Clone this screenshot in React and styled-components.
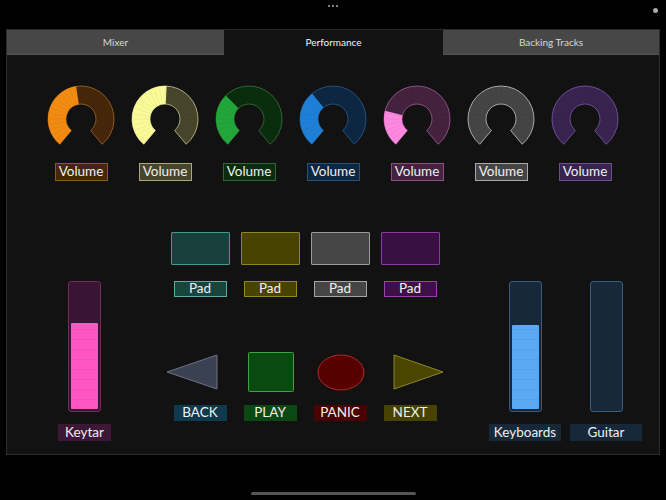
import React from 'react'
import styled, { createGlobalStyle } from 'styled-components'

const GlobalStyle = createGlobalStyle`
  html, body {
    margin: 0;
    padding: 0;
    background: #000;
  }
  body {
    font-family: Lato, "Open Sans", "DejaVu Sans", sans-serif;
    color: #eee;
  }
`

const Screen = styled.div`
  width: 666px;
  height: 500px;
  display: flex;
  flex-direction: column;
  background: #000;
  overflow: hidden;
`

const StatusBar = styled.div`
  height: 29px;
  display: grid;
  grid-template-columns: 1fr auto 1fr;
  align-items: start;
`

const Dots = styled.div`
  grid-column: 2;
  display: flex;
  gap: 2px;
  padding-top: 5px;
  span {
    width: 2px;
    height: 2px;
    border-radius: 50%;
    background: #b0b0b0;
  }
`

const StatusDot = styled.div`
  grid-column: 3;
  justify-self: end;
  margin: 8px 8px 0 0;
  width: 5px;
  height: 5px;
  border-radius: 50%;
  background: #a8a8a8;
`

const Panel = styled.div`
  margin: 0 6px;
  height: 426px;
  box-sizing: border-box;
  border: 1px solid #2c2c2c;
  background: #121212;
  display: flex;
  flex-direction: column;
`

const Tabs = styled.div`
  display: grid;
  grid-template-columns: 217px 219px 1fr;
  height: 25px;
`

const Tab = styled.div`
  display: flex;
  align-items: center;
  justify-content: center;
  font-size: 10px;
  color: ${p => (p.$active ? '#f2f2f2' : '#d8d8d8')};
  background: ${p => (p.$active ? '#121212' : '#474747')};
  border-bottom: 1px solid ${p => (p.$active ? '#121212' : '#555')};
  box-sizing: border-box;
`

const Content = styled.div`
  flex: 1;
  display: flex;
  flex-direction: column;
  align-items: center;
  padding-top: 29px;
`

const KnobRow = styled.div`
  display: grid;
  grid-template-columns: repeat(7, 84px);
`

const KnobCell = styled.div`
  display: flex;
  flex-direction: column;
  align-items: center;
  gap: 9px;
`

const Tag = styled.div`
  box-sizing: border-box;
  width: ${p => p.$w || 53}px;
  height: ${p => p.$h || 18}px;
  display: flex;
  align-items: center;
  justify-content: center;
  font-size: 13.5px;
  line-height: 1;
  color: #f0f0f0;
  background: ${p => p.$bg};
  border: 1px solid ${p => p.$edge || p.$bg};
`

const Bottom = styled.div`
  margin-top: 51px;
  width: 100%;
  display: flex;
  align-items: flex-end;
  padding-left: 51px;
  box-sizing: border-box;
`

const SliderCol = styled.div`
  width: ${p => p.$w}px;
  display: flex;
  flex-direction: column;
  align-items: center;
  gap: 12px;
`

const Middle = styled.div`
  margin-left: 54px;
  padding-bottom: 20px;
  display: grid;
  grid-template-columns: repeat(4, 70px);
  justify-items: center;
`

const Pad = styled.div`
  width: 59px;
  height: 33px;
  box-sizing: border-box;
  background: ${p => p.$bg};
  border: 1px solid ${p => p.$edge};
  border-radius: 1px;
  margin-bottom: 16px;
`

const ShapeCell = styled.svg`
  display: block;
  margin: 55px 0 13px;
`

const RightGroup = styled.div`
  margin-left: 44px;
  display: flex;
  gap: 9px;
`

const Track = styled.div`
  width: 33px;
  height: 131px;
  box-sizing: border-box;
  padding: 2px;
  border: 1px solid ${p => p.$edge};
  border-radius: 3px;
  background: ${p => p.$bg};
  display: flex;
  flex-direction: column;
  justify-content: flex-end;
`

const Fill = styled.div`
  border-radius: 1px;
  background-color: ${p => p.$color};
  background-image: repeating-linear-gradient(
    to top,
    transparent 0,
    transparent 9px,
    rgba(0, 0, 0, 0.06) 9px,
    rgba(0, 0, 0, 0.06) 10px
  );
`

const HomeBar = styled.div`
  margin: auto auto 5px;
  width: 165px;
  height: 3px;
  border-radius: 2px;
  background: #555;
`

const knobs = [
  { value: 0.47, fill: '#f28b12', track: '#462709', edge: '#8f5a22' },
  { value: 0.51, fill: '#fbfa98', track: '#47462c', edge: '#aaa87c' },
  { value: 0.34, fill: '#23a63b', track: '#0b2d0e', edge: '#2d6731' },
  { value: 0.36, fill: '#1f80d8', track: '#0d2742', edge: '#25517e' },
  { value: 0.23, fill: '#fe88e0', track: '#45223f', edge: '#8c507f' },
  { value: 0, fill: '#777', track: '#454545', edge: '#a9a9a9' },
  { value: 0, fill: '#6b4b9b', track: '#38244f', edge: '#6c4e94' },
]

const pads = [
  { bg: '#173f3c', edge: '#3f9d8f', label: '#19453f', ledge: '#58ab9e' },
  { bg: '#484300', edge: '#8c8726', label: '#484300', ledge: '#8e8a2a' },
  { bg: '#454545', edge: '#9b9b9b', label: '#454545', ledge: '#a5a5a5' },
  { bg: '#3a0f42', edge: '#8c3aa1', label: '#3e1146', ledge: '#9a3eb0' },
]

const controls = [
  { name: 'BACK', bg: '#0f3a4e' },
  { name: 'PLAY', bg: '#0a4a12' },
  { name: 'PANIC', bg: '#4a0202' },
  { name: 'NEXT', bg: '#474300' },
]

// knob arc runs from -140deg to +140deg, measured clockwise from the top
const START = -140
const END = 140
const R = 33
const IR = 15

function pt(r, deg) {
  const a = (deg * Math.PI) / 180
  return [35 + r * Math.sin(a), 35 - r * Math.cos(a)]
}

function sector(a0, a1) {
  const large = a1 - a0 > 180 ? 1 : 0
  const [x0, y0] = pt(R, a0)
  const [x1, y1] = pt(R, a1)
  const [x2, y2] = pt(IR, a1)
  const [x3, y3] = pt(IR, a0)
  return `M${x0} ${y0} A${R} ${R} 0 ${large} 1 ${x1} ${y1} L${x2} ${y2} A${IR} ${IR} 0 ${large} 0 ${x3} ${y3} Z`
}

function Knob({ value, fill, track, edge }) {
  const split = START + (END - START) * value
  const ticks = []
  for (let a = START + 10; a < END; a += 10) {
    const [x0, y0] = pt(IR, a)
    const [x1, y1] = pt(R - 1, a)
    ticks.push(<line key={a} x1={x0} y1={y0} x2={x1} y2={y1} />)
  }
  return (
    <svg width="70" height="70" viewBox="0 0 70 70">
      <path d={sector(START, END)} fill={track} stroke={edge} strokeWidth="1" />
      {value > 0 && <path d={sector(START, split)} fill={fill} />}
      <g stroke="rgba(0,0,0,0.07)" strokeWidth="0.7">{ticks}</g>
    </svg>
  )
}

function Shape({ kind }) {
  return (
    <ShapeCell width="70" height="40" viewBox="0 0 70 40">
      {kind === 'BACK' && (
        <polygon points="2,20 52,3 52,37" fill="#3a4150" stroke="#6c7383" strokeWidth="1" />
      )}
      {kind === 'PLAY' && (
        <rect x="13.5" y="0.5" width="45" height="39" rx="1" fill="#0a4a10" stroke="#3aa443" strokeWidth="1" />
      )}
      {kind === 'PANIC' && (
        <ellipse cx="36" cy="20.5" rx="23" ry="17.5" fill="#560000" stroke="#b0262a" strokeWidth="1" />
      )}
      {kind === 'NEXT' && (
        <polygon points="19,3 19,37 68,20" fill="#4a4600" stroke="#8c8826" strokeWidth="1" />
      )}
    </ShapeCell>
  )
}

function Slider({ label, value, color, bg, edge, tagBg, width }) {
  return (
    <SliderCol $w={width}>
      <Track $bg={bg} $edge={edge}>
        {value > 0 && <Fill $color={color} style={{ height: `${value * 100}%` }} />}
      </Track>
      <Tag $w={width} $h={17} $bg={tagBg}>{label}</Tag>
    </SliderCol>
  )
}

export default function App() {
  return (
    <Screen>
      <GlobalStyle />
      <StatusBar>
        <Dots><span /><span /><span /></Dots>
        <StatusDot />
      </StatusBar>
      <Panel>
        <Tabs>
          <Tab>Mixer</Tab>
          <Tab $active>Performance</Tab>
          <Tab>Backing Tracks</Tab>
        </Tabs>
        <Content>
          <KnobRow>
            {knobs.map((k, i) => (
              <KnobCell key={i}>
                <Knob {...k} />
                <Tag $bg={k.track} $edge={k.edge}>Volume</Tag>
              </KnobCell>
            ))}
          </KnobRow>
          <Bottom>
            <Slider label="Keytar" value={0.69} color="#ff56c4" bg="#3a1533" edge="#6d2d5f" tagBg="#3c1836" width={53} />
            <Middle>
              {pads.map((p, i) => (
                <Pad key={'p' + i} $bg={p.bg} $edge={p.edge} />
              ))}
              {pads.map((p, i) => (
                <Tag key={'l' + i} $h={16} $bg={p.label} $edge={p.ledge}>Pad</Tag>
              ))}
              {controls.map(c => (
                <Shape key={'s' + c.name} kind={c.name} />
              ))}
              {controls.map(c => (
                <Tag key={'t' + c.name} $h={16} $bg={c.bg}>{c.name}</Tag>
              ))}
            </Middle>
            <RightGroup>
              <Slider label="Keyboards" value={0.67} color="#5aa9f2" bg="#17283a" edge="#3b5b7c" tagBg="#17283a" width={72} />
              <Slider label="Guitar" value={0} color="#5aa9f2" bg="#17283a" edge="#3b5b7c" tagBg="#17283a" width={72} />
            </RightGroup>
          </Bottom>
        </Content>
      </Panel>
      <HomeBar />
    </Screen>
  )
}
